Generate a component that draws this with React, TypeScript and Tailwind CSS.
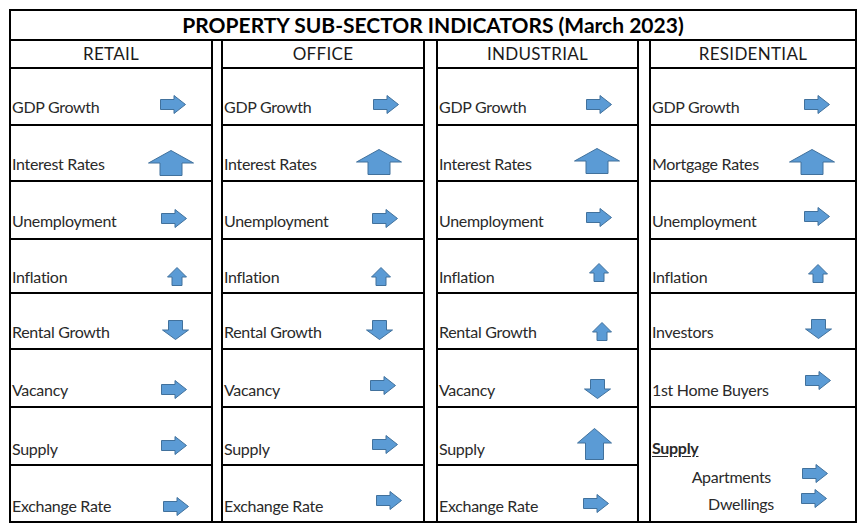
import React from 'react'

type Kind = 'right' | 'up' | 'bigUp' | 'down' | 'tallUp'

interface Cell {
  label: string
  kind: Kind
  pos: string // arrow offsets inside the cell
}

const FILL = '#5B9BD5'
const LINE = '#41719C'

function Arrow({ kind }: { kind: Kind }) {
  if (kind === 'right')
    return (
      <svg width="26" height="19" viewBox="0 0 26 19" className="block">
        <polygon points="0.5,4.5 14,4.5 14,0.5 25.5,9.5 14,18.5 14,14.5 0.5,14.5" fill={FILL} stroke={LINE} />
      </svg>
    )
  if (kind === 'bigUp')
    return (
      <svg width="46" height="26" viewBox="0 0 46 26" className="block">
        <polygon points="0.5,13 23,0.5 45.5,13 34,13 34,25.5 12,25.5 12,13" fill={FILL} stroke={LINE} />
      </svg>
    )
  if (kind === 'tallUp')
    return (
      <svg width="35" height="32" viewBox="0 0 35 32" className="block">
        <polygon points="0.5,15 17.5,0.5 34.5,15 26.5,15 26.5,31.5 8.5,31.5 8.5,15" fill={FILL} stroke={LINE} />
      </svg>
    )
  if (kind === 'down')
    return (
      <svg width="27" height="20" viewBox="0 0 27 20" className="block">
        <polygon points="6.5,0.5 20.5,0.5 20.5,10 26.5,10 13.5,19.5 0.5,10 6.5,10" fill={FILL} stroke={LINE} />
      </svg>
    )
  return (
    <svg width="20" height="19" viewBox="0 0 20 19" className="block">
      <polygon points="0.5,10 10,0.5 19.5,10 15,10 15,18.5 5,18.5 5,10" fill={FILL} stroke={LINE} />
    </svg>
  )
}

// row heights incl. bottom rule; the last row sits on the outer border
const rowH = ['h-[57px]', 'h-[56px]', 'h-[58px]', 'h-[54px]', 'h-[56px]', 'h-[58px]', 'h-[58px]', 'h-[55px]']
const textPb = ['pb-[8px]', 'pb-[7px]', 'pb-[8px]', 'pb-[6px]', 'pb-[7px]', 'pb-[7px]', 'pb-[6px]', 'pb-[6px]']

const retail: Cell[] = [
  { label: 'GDP Growth', kind: 'right', pos: 'mr-[25px] mb-[10px]' },
  { label: 'Interest Rates', kind: 'bigUp', pos: 'mr-[17px] mb-[4px]' },
  { label: 'Unemployment', kind: 'right', pos: 'mr-[24px] mb-[10px]' },
  { label: 'Inflation', kind: 'up', pos: 'mr-[24px] mb-[6px]' },
  { label: 'Rental Growth', kind: 'down', pos: 'mr-[22px] mb-[8px]' },
  { label: 'Vacancy', kind: 'right', pos: 'mr-[24px] mb-[7px]' },
  { label: 'Supply', kind: 'right', pos: 'mr-[24px] mb-[9px]' },
  { label: 'Exchange Rate', kind: 'right', pos: 'mr-[22px] mb-[5px]' },
]

const office: Cell[] = [
  { label: 'GDP Growth', kind: 'right', pos: 'mr-[24px] mb-[10px]' },
  { label: 'Interest Rates', kind: 'bigUp', pos: 'mr-[21px] mb-[5px]' },
  { label: 'Unemployment', kind: 'right', pos: 'mr-[25px] mb-[10px]' },
  { label: 'Inflation', kind: 'up', pos: 'mr-[32px] mb-[6px]' },
  { label: 'Rental Growth', kind: 'down', pos: 'mr-[30px] mb-[8px]' },
  { label: 'Vacancy', kind: 'right', pos: 'mr-[27px] mb-[11px]' },
  { label: 'Supply', kind: 'right', pos: 'mr-[25px] mb-[10px]' },
  { label: 'Exchange Rate', kind: 'right', pos: 'mr-[21px] mb-[11px]' },
]

const industrial: Cell[] = [
  { label: 'GDP Growth', kind: 'right', pos: 'mr-[25px] mb-[10px]' },
  { label: 'Interest Rates', kind: 'bigUp', pos: 'mr-[17px] mb-[6px]' },
  { label: 'Unemployment', kind: 'right', pos: 'mr-[25px] mb-[11px]' },
  { label: 'Inflation', kind: 'up', pos: 'mr-[28px] mb-[10px]' },
  { label: 'Rental Growth', kind: 'up', pos: 'mr-[25px] mb-[7px]' },
  { label: 'Vacancy', kind: 'down', pos: 'mr-[26px] mb-[7px]' },
  { label: 'Supply', kind: 'tallUp', pos: 'mr-[25px] mb-[4px]' },
  { label: 'Exchange Rate', kind: 'right', pos: 'mr-[28px] mb-[8px]' },
]

const residential: Cell[] = [
  { label: 'GDP Growth', kind: 'right', pos: 'mr-[25px] mb-[10px]' },
  { label: 'Mortgage Rates', kind: 'bigUp', pos: 'mr-[20px] mb-[5px]' },
  { label: 'Unemployment', kind: 'right', pos: 'mr-[25px] mb-[12px]' },
  { label: 'Inflation', kind: 'up', pos: 'mr-[27px] mb-[9px]' },
  { label: 'Investors', kind: 'down', pos: 'mr-[23px] mb-[9px]' },
  { label: '1st Home Buyers', kind: 'right', pos: 'mr-[24px] mb-[16px]' },
]

function Row({ cell, i }: { cell: Cell; i: number }) {
  return (
    <div className={`flex items-end justify-between pl-[1px] ${rowH[i]} ${i < 7 ? 'border-b-2 border-black' : ''}`}>
      <span className={`leading-[19px] ${textPb[i]}`}>{cell.label}</span>
      <span className={cell.pos}>
        <Arrow kind={cell.kind} />
      </span>
    </div>
  )
}

function Column({ title, cells, className, children }: { title: string; cells: Cell[]; className: string; children?: React.ReactNode }) {
  return (
    <div className={`flex flex-col border-black ${className}`}>
      <div className="h-[28px] border-b-2 border-black flex items-center justify-center text-[17px] text-[#1a1a1a] tracking-[0.3px]">
        {title}
      </div>
      {cells.map((c, i) => (
        <Row key={c.label} cell={c} i={i} />
      ))}
      {children}
    </div>
  )
}

export default function App() {
  return (
    <div className="w-[864px] h-[531px] bg-white pt-[9px] pl-[9px] text-[16px] tracking-[-0.3px] text-[#2a2a2a]" style={{ fontFamily: 'Lato, "Open Sans", sans-serif' }}>
      <div className="w-[848px] h-[514px] border-2 border-black flex flex-col">
        <div className="h-[30px] border-b-2 border-black flex items-center justify-center text-[21px] tracking-normal font-bold text-black">
          PROPERTY SUB-SECTOR INDICATORS (March 2023)
        </div>
        <div className="flex h-[480px]">
          <Column title="RETAIL" cells={retail} className="w-[202px] border-r-2" />
          <Column title="OFFICE" cells={office} className="w-[204px] ml-[8px] border-x-2" />
          <Column title="INDUSTRIAL" cells={industrial} className="w-[203px] ml-[11px] border-x-2" />
          <Column title="RESIDENTIAL" cells={residential} className="w-[206px] ml-[10px] border-l-2">
            <div className="h-[113px] flex flex-col pl-[1px]">
              <span className="mt-[30px] leading-[19px] font-bold underline underline-offset-2">Supply</span>
              <div className="flex items-end justify-end mt-[6px] h-[27px]">
                <span className="leading-[19px] pb-[4px] mr-[31px]">Apartments</span>
                <span className="mr-[27px] mb-[7px]">
                  <Arrow kind="right" />
                </span>
              </div>
              <div className="flex items-end justify-end h-[27px]">
                <span className="leading-[19px] pb-[4px] mr-[27px]">Dwellings</span>
                <span className="mr-[28px] mb-[9px]">
                  <Arrow kind="right" />
                </span>
              </div>
            </div>
          </Column>
        </div>
      </div>
    </div>
  )
}
